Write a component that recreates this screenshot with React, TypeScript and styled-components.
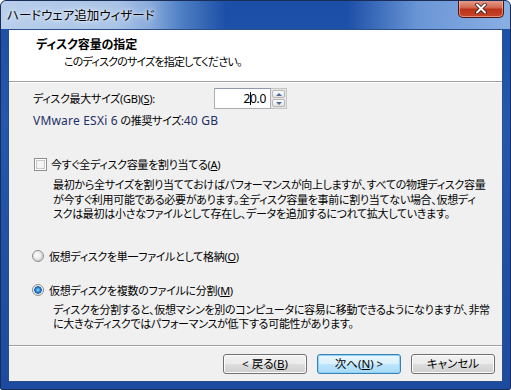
import styled, { createGlobalStyle } from 'styled-components';

const GlobalStyle = createGlobalStyle`
  html, body {
    margin: 0;
    padding: 0;
    background: #ffffff;
  }
  body {
    font-family: "Noto Sans", "Noto Sans CJK JP", sans-serif;
    font-feature-settings: "palt";
    color: #000;
  }
`;

const Window = styled.div`
  width: 511px;
  height: 390px;
  box-sizing: border-box;
  border: 1px solid #1a2d57;
  border-radius: 6px 6px 2px 2px;
  background: linear-gradient(180deg, #1b4ea6 0px, #2457ae 120px, #1c4a9f 390px);
  display: flex;
  flex-direction: column;
  overflow: hidden;
`;

const TitleBar = styled.div`
  height: 28px;
  display: flex;
  justify-content: space-between;
  align-items: flex-start;
  padding-left: 6px;
  background: linear-gradient(90deg, rgba(120, 160, 220, 0) 68%, rgba(120, 162, 222, 0.85) 82%, rgba(150, 185, 232, 0.9) 100%);
`;

const TitleGlow = styled.div`
  flex: 0 0 230px;
  height: 28px;
  margin-left: -6px;
  padding-left: 6px;
  box-sizing: border-box;
  background: linear-gradient(90deg, #b9cfeb 0px, #a9c3e6 115px, #88aadb 150px, #4f7fc4 180px, rgba(27, 78, 166, 0) 225px);
`;

const Title = styled.div`
  padding-top: 6px;
  font-family: "Noto Sans CJK JP", sans-serif;
  font-size: 12.5px;
  line-height: 16px;
  color: #000;
  text-shadow: 0 0 8px #e4eef9, 0 0 5px #e4eef9, 0 0 2px #eef4fb;
`;

const CloseButton = styled.div`
  width: 46px;
  height: 18px;
  margin-top: -1px;
  margin-right: 6px;
  box-sizing: border-box;
  border: 1px solid #4a1410;
  border-top: none;
  border-radius: 0 0 5px 5px;
  background: linear-gradient(to bottom, #e8a493 0%, #d1664f 45%, #b83318 55%, #c9452a 100%);
  box-shadow: inset 0 0 0 1px rgba(255, 200, 190, 0.55);
  display: flex;
  align-items: center;
  justify-content: center;
`;

const Client = styled.div`
  flex: 1;
  margin: 0 7px 7px 7px;
  border: 1px solid #2c4f86;
  background: #f0f0f0;
  display: flex;
  flex-direction: column;
`;

const Header = styled.div`
  height: 51px;
  box-sizing: border-box;
  background: #ffffff;
  padding: 7px 0 0 27px;
`;

const HeaderTitle = styled.div`
  font-size: 12px;
  font-weight: 700;
  line-height: 16px;
  letter-spacing: -0.1px;
`;

const HeaderSub = styled.div`
  font-size: 11px;
  line-height: 16px;
  margin-top: 1px;
  padding-left: 28px;
  letter-spacing: -0.8px;
`;

const Separator = styled.div`
  height: 0;
  border-top: 1px solid #a0a0a0;
  border-bottom: 1px solid #ffffff;
`;

const Content = styled.div`
  height: 262px;
  box-sizing: border-box;
  padding: 5px 0 0 24px;
  font-size: 11px;
  letter-spacing: -0.3px;
`;

const SizeRow = styled.div`
  display: flex;
  align-items: center;
  height: 21px;
`;

const Label = styled.span`
  width: 181px;
  line-height: 16px;
`;

const Latin = styled.span`
  color: #1d2f66;
  font-size: 12px;
  letter-spacing: 0.2px;
`;

const Key = styled.span`
  text-decoration: underline;
`;

const SpinBox = styled.div`
  display: flex;
  height: 21px;
`;

const NumberField = styled.div`
  width: 57px;
  height: 21px;
  box-sizing: border-box;
  border: 1px solid #abadb3;
  border-top-color: #8e9aab;
  background: #fff;
  display: flex;
  align-items: center;
  justify-content: flex-end;
  padding-right: 4px;
  font-size: 12px;
  line-height: 16px;
`;

const Caret = styled.span`
  display: inline-block;
  width: 1px;
  height: 13px;
  background: #000;
  margin: 0 -1px 0 0;
`;

const SpinButtons = styled.div`
  width: 16px;
  display: flex;
  flex-direction: column;
  gap: 1px;
  padding: 1px 0;
  box-sizing: border-box;
  background: #e6e6e6;
  border: 1px solid #c5c5c5;
  border-left: none;
`;

const SpinButton = styled.div<{ $down?: boolean }>`
  flex: 1;
  margin: 0 1px;
  border: 1px solid #b7b7b7;
  border-radius: 2px;
  background: linear-gradient(to bottom, #fbfbfb, #e3e3e3);
  display: flex;
  align-items: center;
  justify-content: center;
  &::after {
    content: '';
    width: 0;
    height: 0;
    border-left: 3px solid transparent;
    border-right: 3px solid transparent;
    ${(p) => (p.$down ? 'border-top: 3px solid #4b6a9a;' : 'border-bottom: 3px solid #4b6a9a;')}
  }
`;

const Recommend = styled.div`
  margin-top: 4px;
  line-height: 16px;
  font-size: 11px;
`;

const OptionRow = styled.div<{ $gap: number }>`
  display: flex;
  align-items: center;
  gap: 4px;
  height: 16px;
  margin-top: ${(p) => p.$gap}px;
`;

const CheckBox = styled.span`
  width: 13px;
  height: 13px;
  box-sizing: border-box;
  border: 1px solid #8f8f8f;
  background: #f4f4f4;
  box-shadow: inset 0 0 0 1px #fff, inset 0 0 0 2px #c9c9c9;
  display: inline-block;
  margin-left: 1px;
`;

const Radio = styled.span<{ $checked?: boolean }>`
  width: 12px;
  height: 12px;
  box-sizing: border-box;
  border-radius: 50%;
  border: 1px solid #8f8f8f;
  background: ${(p) =>
    p.$checked
      ? 'radial-gradient(circle at 50% 50%, #a9e0ff 0px, #2b8ad8 2px, #1a5aa8 3.5px, #f4f4f4 4px, #e2e2e2 6px)'
      : 'radial-gradient(circle at 40% 40%, #ffffff 0px, #e8e8e8 4px, #cfcfcf 6px)'};
  display: inline-block;
  margin-left: -1px;
  margin-right: 1px;
`;

const Desc = styled.div<{ $gap: number }>`
  margin-top: ${(p) => p.$gap}px;
  padding-left: 20px;
  line-height: 14.5px;
  font-size: 11px;
  white-space: nowrap;
`;

const Footer = styled.div`
  flex: 1;
  display: flex;
  justify-content: flex-end;
  align-items: flex-start;
  gap: 10px;
  padding: 7px 7px 0 0;
`;

const Button = styled.div<{ $default?: boolean }>`
  width: 84px;
  height: 20px;
  box-sizing: border-box;
  border: 1px solid ${(p) => (p.$default ? '#3c7fb1' : '#707070')};
  border-radius: 3px;
  background: ${(p) =>
    p.$default
      ? 'linear-gradient(to bottom, #eaf6fd 0%, #d9f0fc 50%, #bee6fd 51%, #a7d9f5 100%)'
      : 'linear-gradient(to bottom, #f2f2f2 0%, #ebebeb 50%, #dddddd 51%, #cfcfcf 100%)'};
  box-shadow: inset 0 0 0 1px ${(p) => (p.$default ? '#8ed3fa' : '#fcfcfc')};
  display: flex;
  align-items: center;
  justify-content: center;
  font-size: 11.5px;
  line-height: 16px;
`;

export default function App() {
  return (
    <>
      <GlobalStyle />
      <Window>
        <TitleBar>
          <TitleGlow>
            <Title>ハードウェア追加ウィザード</Title>
          </TitleGlow>
          <CloseButton>
            <svg width="12" height="11" viewBox="0 0 12 11">
              <path d="M2 1.5 L10 9.5 M10 1.5 L2 9.5" stroke="#3a1a14" strokeWidth="3.6" strokeLinecap="round" />
              <path d="M2 1.5 L10 9.5 M10 1.5 L2 9.5" stroke="#ffffff" strokeWidth="2" strokeLinecap="round" />
            </svg>
          </CloseButton>
        </TitleBar>
        <Client>
          <Header>
            <HeaderTitle>ディスク容量の指定</HeaderTitle>
            <HeaderSub>このディスクのサイズを指定してください。</HeaderSub>
          </Header>
          <Separator />
          <Content>
            <SizeRow>
              <Label>
                ディスク最大サイズ(GB)(<Key>S</Key>):
              </Label>
              <SpinBox>
                <NumberField>
                  2<Caret />0.0
                </NumberField>
                <SpinButtons>
                  <SpinButton />
                  <SpinButton $down />
                </SpinButtons>
              </SpinBox>
            </SizeRow>
            <Recommend>
              <Latin>VMware ESXi 6</Latin> の推奨サイズ:<Latin>40 GB</Latin>
            </Recommend>
            <OptionRow $gap={27}>
              <CheckBox />
              <span>
                今すぐ全ディスク容量を割り当てる(<Key>A</Key>)
              </span>
            </OptionRow>
            <Desc $gap={6}>
              最初から全サイズを割り当てておけばパフォーマンスが向上しますが、すべての物理ディスク容量
              <br />
              が今すぐ利用可能である必要があります。全ディスク容量を事前に割り当てない場合、仮想ディ
              <br />
              スクは最初は小さなファイルとして存在し、データを追加するにつれて拡大していきます。
            </Desc>
            <OptionRow $gap={26}>
              <Radio />
              <span>
                仮想ディスクを単一ファイルとして格納(<Key>O</Key>)
              </span>
            </OptionRow>
            <OptionRow $gap={18}>
              <Radio $checked />
              <span>
                仮想ディスクを複数のファイルに分割(<Key>M</Key>)
              </span>
            </OptionRow>
            <Desc $gap={5}>
              ディスクを分割すると、仮想マシンを別のコンピュータに容易に移動できるようになりますが、非常
              <br />
              に大きなディスクではパフォーマンスが低下する可能性があります。
            </Desc>
          </Content>
          <Separator />
          <Footer>
            <Button>
              &lt; 戻る(<Key>B</Key>)
            </Button>
            <Button $default>
              次へ(<Key>N</Key>) &gt;
            </Button>
            <Button>キャンセル</Button>
          </Footer>
        </Client>
      </Window>
    </>
  );
}
